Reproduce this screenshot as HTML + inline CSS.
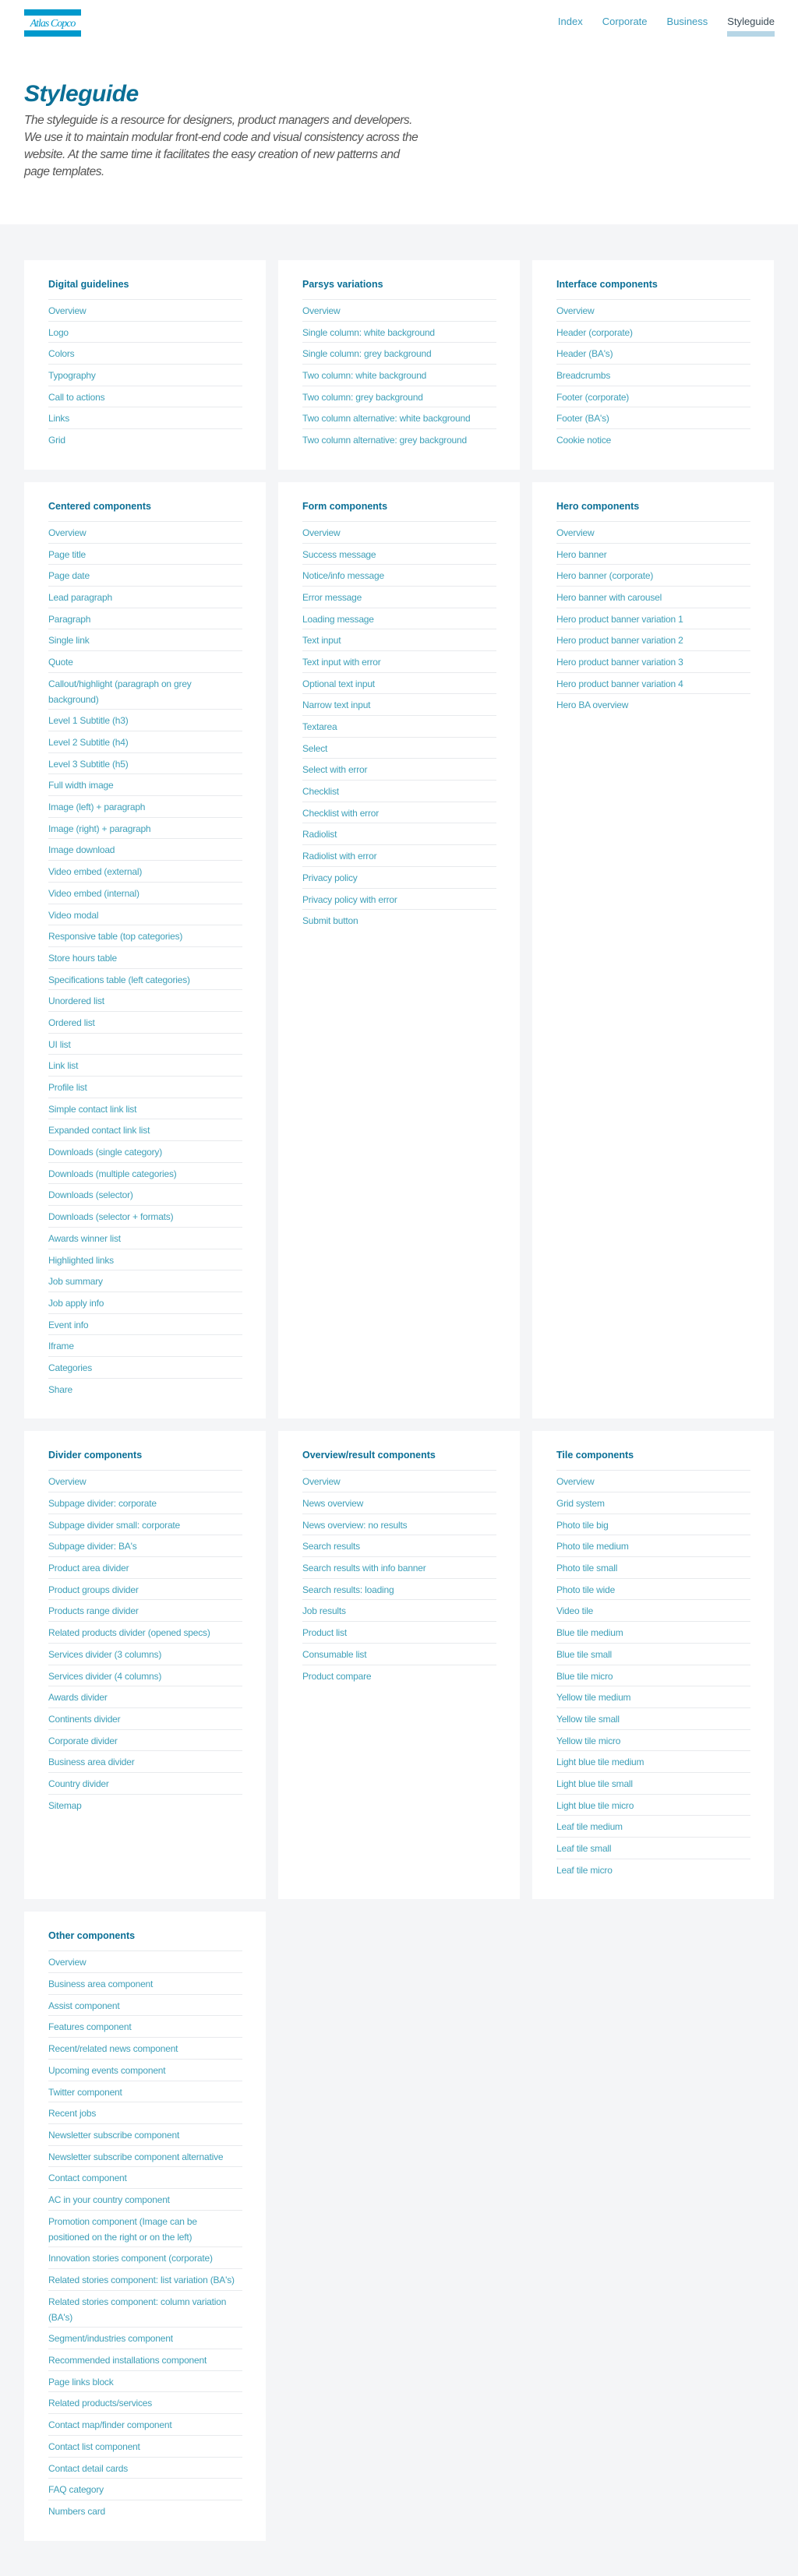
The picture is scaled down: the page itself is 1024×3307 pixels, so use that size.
<!DOCTYPE html>
<html><head><meta charset="utf-8">
<style>
*{box-sizing:border-box;margin:0;padding:0}
body{width:1024px;height:3307px;background:#f4f5f7;font-family:"Liberation Sans",sans-serif;overflow:hidden}
.top{background:#fff;height:288px;position:relative}
.logo{position:absolute;left:31px;top:12px;width:73px;height:35px}
.logo .b{position:absolute;left:0;width:73px;height:8px;background:#0099cc}
.logo .t{position:absolute;left:0;top:10px;width:73px;text-align:center;font-style:italic;font-size:14px;color:#0099cc;letter-spacing:-1px;line-height:18px;font-family:"Liberation Serif",serif}
.nav{position:absolute;top:19px;right:30px;display:flex;gap:25px;font-size:13px;color:#3a9bbd}
.nav span{position:relative;line-height:18px}
.nav .act{color:#3a4a55}
.nav .act:after{content:"";position:absolute;left:0;right:0;top:21px;height:7px;background:#b7d6e6}
h1{position:absolute;left:31px;top:104px;font-size:30px;font-style:italic;font-weight:bold;color:#0b6f96;letter-spacing:-0.5px}
.intro{position:absolute;left:31px;top:144px;font-size:15.5px;line-height:22px;font-style:italic;color:#555;letter-spacing:-0.5px;white-space:nowrap}
.wrap{padding:46px 31px 0 31px}
.row{display:flex;gap:16px;margin-bottom:16px;align-items:stretch}
.card{width:310px;background:#fff;padding:21px 30px 25px 31px}
.card h3{font-size:12.5px;line-height:20px;font-weight:bold;color:#0b6f96;margin-bottom:9px}
.card ul{list-style:none;width:249px}
.card li{border-top:1px solid #e8eaed;font-size:12px;line-height:20px;padding:4px 0 2.7px;color:#3fa0b9;white-space:nowrap;letter-spacing:-0.2px}
.empty{width:310px}
</style></head><body>
<div class="top">
<div class="logo"><div class="b" style="top:0"></div><div class="t">Atlas Copco</div><div class="b" style="top:27px"></div></div>
<div class="nav"><span>Index</span><span>Corporate</span><span>Business</span><span class="act">Styleguide</span></div>
<h1>Styleguide</h1>
<div class="intro">The styleguide is a resource for designers, product managers and developers.<br>We use it to maintain modular front-end code and visual consistency across the<br>website. At the same time it facilitates the easy creation of new patterns and<br>page templates.</div>
</div>
<div class="wrap">
<div class="row">
<div class="card"><h3>Digital guidelines</h3><ul><li>Overview</li><li>Logo</li><li>Colors</li><li>Typography</li><li>Call to actions</li><li>Links</li><li>Grid</li></ul></div>
<div class="card"><h3>Parsys variations</h3><ul><li>Overview</li><li>Single column: white background</li><li>Single column: grey background</li><li>Two column: white background</li><li>Two column: grey background</li><li>Two column alternative: white background</li><li>Two column alternative: grey background</li></ul></div>
<div class="card"><h3>Interface components</h3><ul><li>Overview</li><li>Header (corporate)</li><li>Header (BA's)</li><li>Breadcrumbs</li><li>Footer (corporate)</li><li>Footer (BA's)</li><li>Cookie notice</li></ul></div>
</div>
<div class="row">
<div class="card"><h3>Centered components</h3><ul><li>Overview</li><li>Page title</li><li>Page date</li><li>Lead paragraph</li><li>Paragraph</li><li>Single link</li><li>Quote</li><li>Callout/highlight (paragraph on grey<br>background)</li><li>Level 1 Subtitle (h3)</li><li>Level 2 Subtitle (h4)</li><li>Level 3 Subtitle (h5)</li><li>Full width image</li><li>Image (left) + paragraph</li><li>Image (right) + paragraph</li><li>Image download</li><li>Video embed (external)</li><li>Video embed (internal)</li><li>Video modal</li><li>Responsive table (top categories)</li><li>Store hours table</li><li>Specifications table (left categories)</li><li>Unordered list</li><li>Ordered list</li><li>UI list</li><li>Link list</li><li>Profile list</li><li>Simple contact link list</li><li>Expanded contact link list</li><li>Downloads (single category)</li><li>Downloads (multiple categories)</li><li>Downloads (selector)</li><li>Downloads (selector + formats)</li><li>Awards winner list</li><li>Highlighted links</li><li>Job summary</li><li>Job apply info</li><li>Event info</li><li>Iframe</li><li>Categories</li><li>Share</li></ul></div>
<div class="card"><h3>Form components</h3><ul><li>Overview</li><li>Success message</li><li>Notice/info message</li><li>Error message</li><li>Loading message</li><li>Text input</li><li>Text input with error</li><li>Optional text input</li><li>Narrow text input</li><li>Textarea</li><li>Select</li><li>Select with error</li><li>Checklist</li><li>Checklist with error</li><li>Radiolist</li><li>Radiolist with error</li><li>Privacy policy</li><li>Privacy policy with error</li><li>Submit button</li></ul></div>
<div class="card"><h3>Hero components</h3><ul><li>Overview</li><li>Hero banner</li><li>Hero banner (corporate)</li><li>Hero banner with carousel</li><li>Hero product banner variation 1</li><li>Hero product banner variation 2</li><li>Hero product banner variation 3</li><li>Hero product banner variation 4</li><li>Hero BA overview</li></ul></div>
</div>
<div class="row">
<div class="card"><h3>Divider components</h3><ul><li>Overview</li><li>Subpage divider: corporate</li><li>Subpage divider small: corporate</li><li>Subpage divider: BA's</li><li>Product area divider</li><li>Product groups divider</li><li>Products range divider</li><li>Related products divider (opened specs)</li><li>Services divider (3 columns)</li><li>Services divider (4 columns)</li><li>Awards divider</li><li>Continents divider</li><li>Corporate divider</li><li>Business area divider</li><li>Country divider</li><li>Sitemap</li></ul></div>
<div class="card"><h3>Overview/result components</h3><ul><li>Overview</li><li>News overview</li><li>News overview: no results</li><li>Search results</li><li>Search results with info banner</li><li>Search results: loading</li><li>Job results</li><li>Product list</li><li>Consumable list</li><li>Product compare</li></ul></div>
<div class="card"><h3>Tile components</h3><ul><li>Overview</li><li>Grid system</li><li>Photo tile big</li><li>Photo tile medium</li><li>Photo tile small</li><li>Photo tile wide</li><li>Video tile</li><li>Blue tile medium</li><li>Blue tile small</li><li>Blue tile micro</li><li>Yellow tile medium</li><li>Yellow tile small</li><li>Yellow tile micro</li><li>Light blue tile medium</li><li>Light blue tile small</li><li>Light blue tile micro</li><li>Leaf tile medium</li><li>Leaf tile small</li><li>Leaf tile micro</li></ul></div>
</div>
<div class="row">
<div class="card"><h3>Other components</h3><ul><li>Overview</li><li>Business area component</li><li>Assist component</li><li>Features component</li><li>Recent/related news component</li><li>Upcoming events component</li><li>Twitter component</li><li>Recent jobs</li><li>Newsletter subscribe component</li><li>Newsletter subscribe component alternative</li><li>Contact component</li><li>AC in your country component</li><li>Promotion component (Image can be<br>positioned on the right or on the left)</li><li>Innovation stories component (corporate)</li><li>Related stories component: list variation (BA's)</li><li>Related stories component: column variation<br>(BA's)</li><li>Segment/industries component</li><li>Recommended installations component</li><li>Page links block</li><li>Related products/services</li><li>Contact map/finder component</li><li>Contact list component</li><li>Contact detail cards</li><li>FAQ category</li><li>Numbers card</li></ul></div>
<div class="empty"></div><div class="empty"></div>
</div>
</div>
</body></html>
